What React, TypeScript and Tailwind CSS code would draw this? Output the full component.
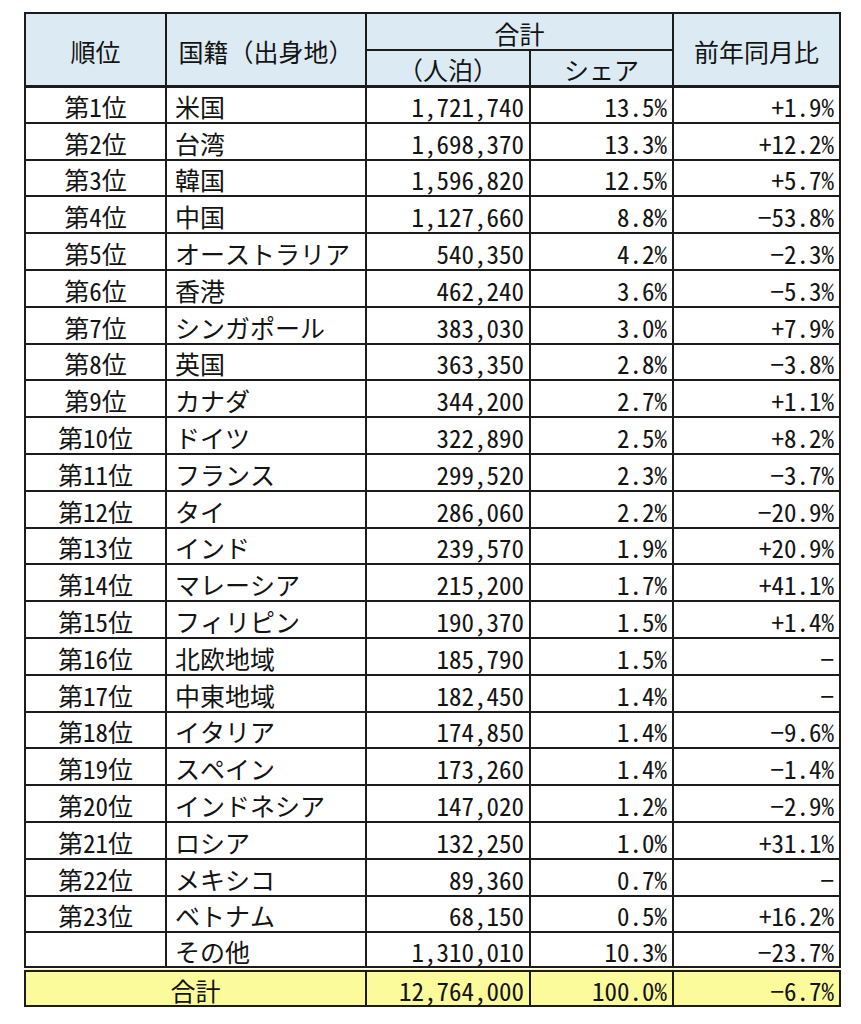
const rows: [string, string, string, string, string][] = [
  ["第1位", "米国", "1,721,740", "13.5%", "+1.9%"],
  ["第2位", "台湾", "1,698,370", "13.3%", "+12.2%"],
  ["第3位", "韓国", "1,596,820", "12.5%", "+5.7%"],
  ["第4位", "中国", "1,127,660", "8.8%", "−53.8%"],
  ["第5位", "オーストラリア", "540,350", "4.2%", "−2.3%"],
  ["第6位", "香港", "462,240", "3.6%", "−5.3%"],
  ["第7位", "シンガポール", "383,030", "3.0%", "+7.9%"],
  ["第8位", "英国", "363,350", "2.8%", "−3.8%"],
  ["第9位", "カナダ", "344,200", "2.7%", "+1.1%"],
  ["第10位", "ドイツ", "322,890", "2.5%", "+8.2%"],
  ["第11位", "フランス", "299,520", "2.3%", "−3.7%"],
  ["第12位", "タイ", "286,060", "2.2%", "−20.9%"],
  ["第13位", "インド", "239,570", "1.9%", "+20.9%"],
  ["第14位", "マレーシア", "215,200", "1.7%", "+41.1%"],
  ["第15位", "フィリピン", "190,370", "1.5%", "+1.4%"],
  ["第16位", "北欧地域", "185,790", "1.5%", "−"],
  ["第17位", "中東地域", "182,450", "1.4%", "−"],
  ["第18位", "イタリア", "174,850", "1.4%", "−9.6%"],
  ["第19位", "スペイン", "173,260", "1.4%", "−1.4%"],
  ["第20位", "インドネシア", "147,020", "1.2%", "−2.9%"],
  ["第21位", "ロシア", "132,250", "1.0%", "+31.1%"],
  ["第22位", "メキシコ", "89,360", "0.7%", "−"],
  ["第23位", "ベトナム", "68,150", "0.5%", "+16.2%"],
  ["", "その他", "1,310,010", "10.3%", "−23.7%"],
];

const cell = "border-2 border-[#1c1c1c] h-[36.8px] p-0 leading-none";
const head = "border-2 border-[#1c1c1c] font-normal text-center p-0 pt-1 leading-none";

export default function App() {
  return (
    <div
      className="bg-white w-[861px] h-[1024px] pt-[12px] pl-[24px] text-[#141414] text-[25px]"
      style={{ fontFamily: '"Noto Sans Mono CJK JP", "Noto Sans CJK JP", sans-serif' }}
    >
      <table className="border-collapse table-fixed w-[815px]">
        <colgroup>
          <col className="w-[141px]" />
          <col className="w-[200px]" />
          <col className="w-[164px]" />
          <col className="w-[143px]" />
          <col className="w-[167px]" />
        </colgroup>
        <thead>
          <tr className="bg-[#dcebf3]">
            <th rowSpan={2} className={`${head} border-b-[3px]`}>
              順位
            </th>
            <th rowSpan={2} className={`${head} border-b-[3px]`}>
              国籍（出身地）
            </th>
            <th colSpan={2} className={`${head} h-[37px]`}>
              合計
            </th>
            <th rowSpan={2} className={`${head} border-b-[3px]`}>
              前年同月比
            </th>
          </tr>
          <tr className="bg-[#dcebf3]">
            <th className={`${head} border-b-[3px] h-[36px]`}>（人泊）</th>
            <th className={`${head} border-b-[3px]`}>シェア</th>
          </tr>
        </thead>
        <tbody>
          {rows.map(([rank, name, count, share, yoy]) => (
            <tr key={name}>
              <td className={`${cell} text-center pt-1`}>{rank}</td>
              <td className={`${cell} pl-[8px] pt-1 whitespace-nowrap`}>{name}</td>
              <td className={`${cell} text-right pr-[5px] pt-1`}>{count}</td>
              <td className={`${cell} text-right pr-[5px] pt-1`}>{share}</td>
              <td className={`${cell} text-right pr-[5px] pt-1`}>{yoy}</td>
            </tr>
          ))}
          <tr className="bg-[#fbfb9c]">
            <td colSpan={2} className="border-2 border-t-[6px] border-[#1c1c1c] border-double h-[37px] text-center p-0 pt-1 leading-none">
              合計
            </td>
            <td className="border-2 border-t-[6px] border-[#1c1c1c] border-double text-right p-0 pr-[5px] pt-1 leading-none">
              12,764,000
            </td>
            <td className="border-2 border-t-[6px] border-[#1c1c1c] border-double text-right p-0 pr-[5px] pt-1 leading-none">
              100.0%
            </td>
            <td className="border-2 border-t-[6px] border-[#1c1c1c] border-double text-right p-0 pr-[5px] pt-1 leading-none">
              −6.7%
            </td>
          </tr>
        </tbody>
      </table>
    </div>
  );
}
